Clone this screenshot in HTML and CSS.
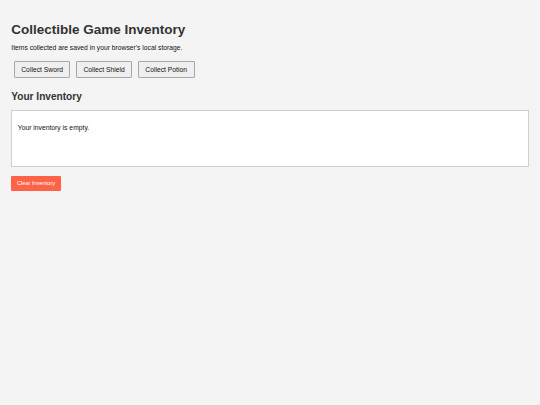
FILE: index.html
```html
<!DOCTYPE html>
<html lang="en">
<head>
    <meta charset="UTF-8">
    <meta name="viewport" content="width=device-width, initial-scale=1.0">
    <title>Collectible Game Inventory</title>
    <link rel="stylesheet" href="styles.css">
</head>

<body>
    <h1>Collectible Game Inventory</h1>
    <p class="intro">Items collected are saved in your browser's local storage.</p>

    <div class="actions">
        <button class="collect-btn" data-item="Sword">Collect Sword</button>
        <button class="collect-btn" data-item="Shield">Collect Shield</button>
        <button class="collect-btn" data-item="Potion">Collect Potion</button>
    </div>

    <h2>Your Inventory</h2>
    <div class="inventory" id="inventory">
        <p class="empty">Your inventory is empty.</p>
    </div>

    <button class="clear-btn" id="clearButton">Clear Inventory</button>
</body>
</html>
```

FILE: styles.css
```css
/* Page */
body {
    font-family: 'Liberation Sans', Arial, sans-serif;
    font-size: 6.75px;
    background-color: #f4f4f4;
    color: #111;
    margin: 0;
    padding: 11.25px;
}

h1 {
    color: #333;
    font-size: 13.5px;
    margin: 10.5px 0 7px;
}

h2 {
    color: #333;
    font-size: 10.125px;
    margin: 10px 0 8.5px;
}

.intro {
    margin: 0 0 7px;
}

/* Collect buttons */
.actions {
    display: flex;
    gap: 5.6px;
    padding: 0 2.5px;
}

.collect-btn {
    font-family: 'Liberation Sans', Arial, sans-serif;
    font-size: 6.75px;
    padding: 4.3px 6.5px;
    margin: 2.8px 0;
    background-color: #efefef;
    color: #111;
    border: 1px solid #a8a8a8;
    border-radius: 1px;
    cursor: pointer;
}

.collect-btn:hover {
    background-color: #e2e2e2;
}

/* Inventory box */
.inventory {
    background-color: #fff;
    border: 1px solid #cfcfcf;
    padding: 5.6px;
    min-height: 43px;
}

.empty {
    margin: 6.75px 0;
}

.clear-btn {
    font-family: 'Liberation Sans', Arial, sans-serif;
    font-size: 5.625px;
    margin-top: 9px;
    padding: 4.7px 5.8px;
    background-color: #ff6347;
    color: #fff;
    border: none;
    border-radius: 1px;
    cursor: pointer;
}

.clear-btn:hover {
    background-color: #e5533a;
}
```
